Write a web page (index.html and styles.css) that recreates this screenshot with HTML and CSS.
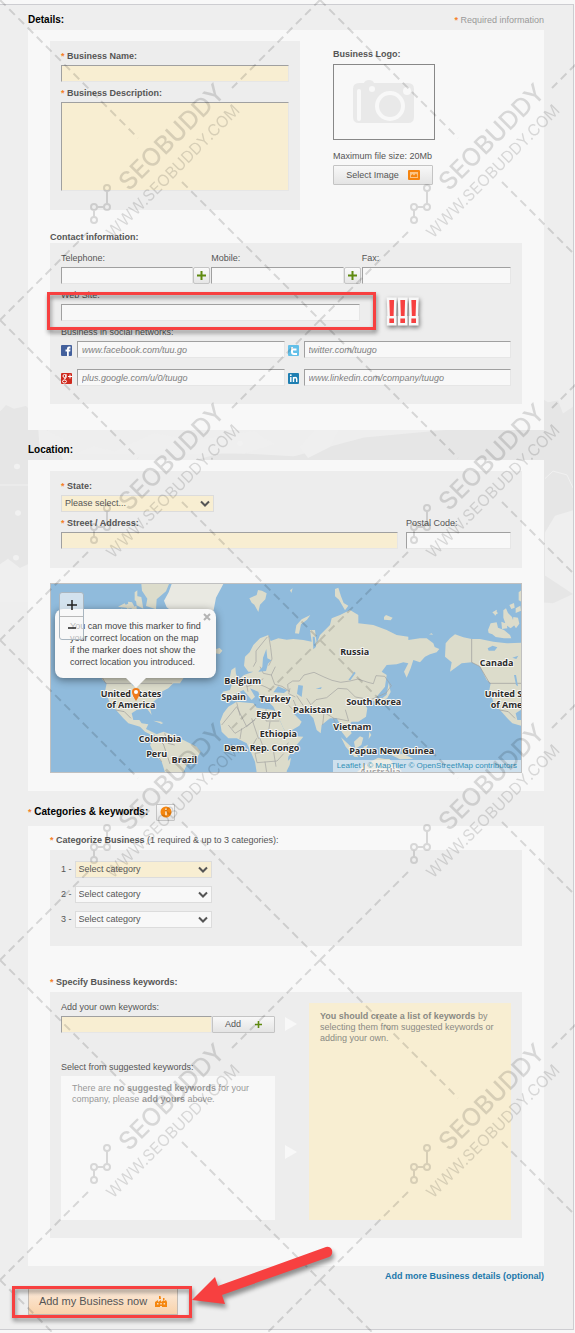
FILE: index.html
```html
<!DOCTYPE html>
<html lang="en">
<head>
<meta charset="utf-8">
<meta name="viewport" content="width=device-width, initial-scale=1">
<title>Add my Business</title>
<link rel="stylesheet" href="styles.css">
</head>
<body>
<main class="page">
<svg class="backdrop" viewBox="0 0 573 290" preserveAspectRatio="none" aria-hidden="true">
  <path fill="#e6e6e6" d="M0 50l6-7 8 4 12-3 16 18 8 12-6 10 14 6 6 14 50 12 60-8 50-14 70 4 70-20 100-10 70-30 6-3 8 5 10-2 5 14 14-10 16-6v200l-40 20-110-10H0z"/>
  <path fill="#efefef" d="M38 65l24 14 14 16 18-8 20 6 40-20 40 8 60-10 20 14-30 10H40zM318 66l20 4-8 18-22 12-8-12zM0 214l8-6 12 10 8-4v40H0zM545 180l10-18 18-6v90l-28-20z"/>
  <g fill="#f1f1f1"><circle cx="17" cy="109" r="3"/><circle cx="18" cy="159" r="3"/><circle cx="16" cy="207" r="3"/><circle cx="240" cy="84" r="3"/></g>
  <path d="M0 129h28M545 122l8-8 14 4 6 14" fill="none" stroke="#f1f1f1"/>
</svg>
<form class="content">
  <header class="head head-first"><h2>Details:</h2><p class="required-note"><span class="star">*</span> Required information</p></header>
  <section class="panel details">
    <div class="details-row">
      <div class="box identity">
        <label for="name"><span class="star">*</span> Business Name:</label>
        <input class="field needed" id="name" type="text">
        <label for="desc"><span class="star">*</span> Business Description:</label>
        <textarea class="field needed desc" id="desc"></textarea>
      </div>
      <div class="logo-col">
        <b>Business Logo:</b>
        <div class="logo-frame">
          <svg width="64" height="46" viewBox="0 0 64 46" aria-hidden="true"><path fill="#e9e9e9" d="M7 4h5q1-3 5-3t5 3h34q6 0 6 6v28q0 6-6 6H7q-6 0-6-6V10q0-6 6-6z"/><rect x="5" y="10" width="4" height="32" rx="2" fill="#f8f8f8"/><circle cx="20" cy="10" r="3" fill="#f8f8f8"/><circle cx="55" cy="12" r="4" fill="#f8f8f8"/><circle cx="38" cy="27" r="15" fill="#f8f8f8"/><circle cx="38" cy="27" r="11" fill="#e9e9e9"/></svg>
        </div>
        <span>Maximum file size: 20Mb</span>
        <button class="btn select-image" type="button">Select Image
          <svg width="12" height="10" viewBox="0 0 12 10" aria-hidden="true"><rect width="12" height="10" rx="1" fill="#f58410"/><path fill="#fbc588" d="M2 2h8v6H2z"/><path fill="#f58410" d="M3 7V5.500l1.500-1.500L6 5.500 8 3.500l1.200 1.500v2z"/></svg>
        </button>
      </div>
    </div>
    <h3 class="sub contact-title">Contact information:</h3>
    <div class="box contact">
      <div class="phones">
        <div class="stack"><label class="plain" for="tel">Telephone:</label><div class="joined"><input class="field" id="tel" type="tel"><button class="plus" type="button" aria-label="Add telephone"><svg width="9" height="9" viewBox="0 0 9 9"><path d="M3.500 0h2v3.500H9v2H5.500V9h-2V5.500H0v-2h3.500z" fill="#5f8a10"/></svg></button></div></div>
        <div class="stack"><label class="plain" for="mob">Mobile:</label><div class="joined"><input class="field" id="mob" type="tel"><button class="plus" type="button" aria-label="Add mobile"><svg width="9" height="9" viewBox="0 0 9 9"><path d="M3.500 0h2v3.500H9v2H5.500V9h-2V5.500H0v-2h3.500z" fill="#5f8a10"/></svg></button></div></div>
        <div class="stack"><label class="plain" for="fax">Fax:</label><input class="field" id="fax" type="tel"></div>
      </div>
      <div class="stack website"><label class="plain" for="web">Web Site:</label><input class="field" id="web" type="url"><div class="callout web-callout"></div><span class="bangs">!!!</span></div>
      <div class="stack">
        <span>Business in social networks:</span>
        <div class="social">
          <label class="net"><svg width="12" height="12" viewBox="0 0 12 12"><rect width="11" height="11" y="1" rx="1" fill="#43609c"/><path d="M6 12V7.500H4.500v-2H6V4.500Q6 2.500 8 2.500h1.500v2h-1q-.7 0-.7.700v.300h1.700l-.3 2H7.800V12z" fill="#fff"/></svg><input class="field" type="text" aria-label="Facebook" placeholder="www.facebook.com/tuu.go"></label>
          <label class="net"><svg width="12" height="12" viewBox="0 0 12 12"><rect width="11" height="11" y="1" rx="1" fill="#62bfe8"/><path d="M4 3v5q0 2 2 2h3M4 5.500h4.500" fill="none" stroke="#fff" stroke-width="2"/></svg><input class="field" type="text" aria-label="Twitter" placeholder="twitter.com/tuugo"></label>
          <label class="net"><svg width="12" height="12" viewBox="0 0 12 12"><rect width="11" height="11" y="1" rx="1" fill="#cf2a1e"/><g fill="none" stroke="#fff"><circle cx="3.500" cy="4" r="1.500"/><path d="M5 2v4L3 7"/><ellipse cx="3.500" cy="9.500" rx="2" ry="1.500"/><path d="M7 4.500h4M9 2.500v4"/></g></svg><input class="field" type="text" aria-label="Google Plus" placeholder="plus.google.com/u/0/tuugo"></label>
          <label class="net"><svg width="12" height="12" viewBox="0 0 12 12"><rect width="11" height="11" y="1" rx="1" fill="#1f7fb2"/><path d="M2.800 5v5M5.500 10V5m0 2q0-1.500 1.600-1.500T8.700 7v3" fill="none" stroke="#fff" stroke-width="1.400"/><circle cx="2.800" cy="3.200" r=".9" fill="#fff"/></svg><input class="field" type="text" aria-label="LinkedIn" placeholder="www.linkedin.com/company/tuugo"></label>
        </div>
      </div>
    </div>
  </section>

  <header class="head"><h2>Location:</h2></header>
  <section class="panel location">
    <div class="box address">
      <label for="state"><span class="star">*</span> State:</label>
      <div class="pick state"><select class="needed" id="state"><option>Please select...</option></select><svg width="10" height="7" viewBox="0 0 10 7" aria-hidden="true"><path d="M1 1.500l4 4 4-4" fill="none" stroke="#555" stroke-width="2"/></svg></div>
      <div class="street">
        <div class="stack"><label for="street"><span class="star">*</span> Street / Address:</label><input class="field needed" id="street" type="text"></div>
        <div class="stack"><label class="plain" for="zip">Postal Code:</label><input class="field" id="zip" type="text"></div>
      </div>
    </div>
    <div class="map">
      <svg class="map-art" viewBox="0 0 1410 564" preserveAspectRatio="xMinYMin slice" role="img" aria-label="World map">
        <defs>
          <g id="americas" stroke-linejoin="round">
            <path d="M65 205L78 190 93 178 118 187 143 192 168 192 208 200 248 205 291 203 400 215 405 240 440 290 430 310 420 325 400 325 385 340 365 350 360 365 340 380 330 400 335 420 320 400 290 405 275 415 280 435 298 435 305 445 325 448 318 462 335 470 350 478 370 470 400 480 430 495 470 515 482 530 470 550 440 570 430 592 375 592 365 560 345 540 330 510 335 500 345 480 330 478 315 470 300 455 265 445 250 430 228 405 208 380 196 345 200 325 188 315 176 290 168 275 143 262 113 265 78 290 83 262 63 245z"/>
            <path d="M192 165L200 145 218 142 222 158 240 165 258 180 262 190 240 190 215 186 205 178 194 174zM205 112l14-8-4 18zM214 105l8 10-10 6zM238 106l8-6 6 14 12 12 8 24-12 10-14-10-8-22zM232 140l16 6 2 14-16 2zM268 126l14 2 4 18-10 14-10-16zM256 90l14-6 2 14-10 4zM284 52l8-6v34l-8-4zM275 100l14-8 2 15-16 7z"/>
            <path d="M340 437l25 3-5 5zM360 440l10 4-8 4z"/>
            <path d="M143 192v70l24 12 30 51h200M227 405l26 5 20 20M345 485l25 22 20 60M345 530l20 30M374 475l10 30 20 5" fill="none" stroke="#999" stroke-width="2"/>
            <path d="M191 220l15-8 14 5-8 10-18 0zM265 248l18-6-6 10zM270 300l6 30 6 4-6-34z" fill="#90bbdc"/>
          </g>
        </defs>
        <g transform="translate(-33 -27)" fill="#dcdccb">
          <path fill="#e9e9e2" d="M395 27l-9 25-14 25 8 20 20 15 120-2 8-42 22-41z"/>
          <path d="M304 27h83l-9 22-28 24-2 30-30-10 4-22-16-24zM286 62l18 4 6 35-20-10zM264 80l12 2 10 18-20 0zM234 95l20-10 10 14zM525 223l14-4 8 8-8 10-14-2zM628 70l22-10 4-15 12 2 14 8-4 18-16 16-5 22-12-22-8-6z"/>
          <use href="#americas"/><use href="#americas" x="1152"/>
          <path d="M612 272L615 245 629 232 640 210 660 190 685 180 692 198 715 190 740 194 760 192 790 195 815 200 810 165 825 165 830 205 840 180 870 150 875 130 900 120 930 105 955 120 955 145 1000 150 1040 165 1070 180 1105 185 1105 195 1140 190 1160 190 1180 205 1184 216 1198 222 1190 232 1170 238 1155 245 1140 262 1120 255 1112 280 1100 308 1092 290 1105 265 1090 262 1070 268 1040 270 1025 290 1040 300 1035 335 1010 365 1020 385 1005 380 985 370 965 375 982 400 978 425 955 440 935 440 925 450 935 475 920 490 905 470 902 450 890 430 870 430 845 450 842 475 830 465 820 430 805 415 780 412 760 415 785 440 778 452 740 475 730 460 715 425 700 395 680 375 665 380 655 350 630 340 645 365 635 375 610 345 590 355 570 380 548 378 548 350 570 345 575 330 600 310 612 300 640 290 625 290z"/>
          <path d="M565 395L590 380 640 385 650 398 700 405 715 425 730 460 742 482 790 485 770 510 745 545 740 592 650 592 645 560 630 525 620 505 590 490 565 490 545 470 540 440 550 415zM570 305l4-20 12-8 2 20 10 20-20 8-16-2zM555 312l10-4-2 16-10 2zM765 175l4-24 16-18 26-13-10 14-18 14-6 28zM737 580l4-20 12-12-4 22-10 20zM885 42l10-4 8 26 8 20 14 8-10 14-18-32-12-10zM1032 126l6-6 20 8-6 8-20-2zM1046 323l6 28-10 18-26 18 4-12 20-16zM1167 178l8-3 4 4zM903 487l32 30 20 30-12-2-26-30zM942 500l18-16 10 4-6 22-18 12zM970 515l14-6-6 14 4 18-8-4zM1040 533l50 4 30 14-40 2zM972 572l20-12 22-12 20 4 14 0 14 14 20 26H950zM750 46l8-6-4 14zM988 470l6 10-8 12z"/>
          <path d="M640 275l8-15 0-32 24-30 10-12M686 182l6 36 4 34-10 20M660 275l10 20 24 5 12-25M694 300l10 28 22 6 24 16M600 320l20 10 4 20M620 335l30-10 20-14M650 325l25 10 20 10M545 450l45-55 30 60 50-45M678 402v36h40M590 382l10 40M565 450l20 25 25-15 35-25M605 460l-5 32M635 430l20 60 55-20 25 10M650 490l-15 26M660 490l15 40 30-10 25 5 15-22M690 440l-5 34M675 530l-30 5 6 28 60-5 20-22M675 560l5 32M700 525l8 50M745 350l-2-22 15-10 20 0 14-18 30-8 30 14 24 10 26 6 28-4 24-6 30 10 16 4 8-24 26 2 20 28-16 22-22 10-24 10-46-8-24-24-28-2-34 28-32 6-14 14M750 340l-4 16 20 10M770 362l20 30M760 375l14 34M800 370l14 22M848 450l4-38 30 18 14 2 30 6M880 430l10 22M745 390l20 20M916 404l10 34" fill="none" stroke="#a2a2a0" stroke-width="2"/>
          <path d="M655 290l12-14 2-28 10-26 3 28 12 6-10 10-6 22zM700 352l14-18 28 12-10 8zM775 330l14 2-4 34-14-10zM827 342l18-6-2 6zM925 315l18-25 4 4-16 22zM818 185l6 0 4 30-8 8z" fill="#90bbdc"/>
        </g>
        <g class="places">
          <text x="240" y="340">United States</text><text x="240" y="373">of America</text>
          <text x="327" y="475">Colombia</text><text x="317" y="518">Peru</text><text x="400" y="537">Brazil</text>
          <text x="575" y="301">Belgium</text><text x="548" y="348">Spain</text><text x="672" y="353">Turkey</text><text x="653" y="399">Egypt</text><text x="682" y="459">Ethiopia</text><text x="632" y="502">Dem. Rep. Congo</text><text x="785" y="386">Pakistan</text>
          <text x="911" y="212">Russia</text><text x="968" y="363">South Korea</text><text x="904" y="437">Vietnam</text><text x="1022" y="510">Papua New Guinea</text><text x="988" y="573">Australia</text><text x="1337" y="246">Canada</text><text x="1392" y="340">United States</text><text x="1392" y="373">of America</text>
        </g>
      </svg>
      <div class="popup"><p>You can move this marker to find your correct location on the map if the marker does not show the correct location you introduced.</p><button class="close" type="button" aria-label="Close"><svg width="8" height="8" viewBox="0 0 8 8"><path d="M1 1l6 6M7 1L1 7" stroke="#b4b4b4" stroke-width="2"/></svg></button></div>
      <svg class="marker" width="10" height="14" viewBox="0 0 10 14" aria-hidden="true"><path d="M5 14Q1 8 1 5a4 4 0 0 1 8 0Q9 8 5 14z" fill="#ef7b1a"/><circle cx="5" cy="5" r="2" fill="#fff"/></svg>
      <div class="zoomer"><button type="button" aria-label="Zoom in"><svg width="10" height="10" viewBox="0 0 10 10"><path d="M5 0v10M0 5h10" stroke="#222" stroke-width="1.500"/></svg></button><button type="button" aria-label="Zoom out"><svg width="8" height="10" viewBox="0 0 8 10"><path d="M0 5h8" stroke="#222" stroke-width="1.500"/></svg></button></div>
      <p class="credits"><a href="#leaflet">Leaflet</a> | <a href="#maptiler">© MapTiler</a> <a href="#osm">© OpenStreetMap contributors</a></p>
    </div>
  </section>

  <header class="head head-cats"><h2><span class="star">*</span> Categories &amp; keywords:</h2><button class="btn info" type="button" aria-label="Information"><svg width="12" height="12" viewBox="0 0 12 12"><circle cx="6" cy="6" r="5.500" fill="#f5860f"/><path d="M6 5.200v4M6 2.500v1.600" stroke="#ffe9cc" stroke-width="1.600"/></svg></button></header>
  <section class="panel cats">
    <h3 class="sub"><span class="star">*</span> Categorize Business <span class="light">(1 required &amp; up to 3 categories):</span></h3>
    <div class="box choices">
      <div class="choice"><label class="plain" for="c1">1 -</label><div class="pick"><select class="needed" id="c1"><option>Select category</option></select><svg width="10" height="7" viewBox="0 0 10 7" aria-hidden="true"><path d="M1 1.500l4 4 4-4" fill="none" stroke="#555" stroke-width="2"/></svg></div></div>
      <div class="choice"><label class="plain" for="c2">2 -</label><div class="pick"><select id="c2"><option>Select category</option></select><svg width="10" height="7" viewBox="0 0 10 7" aria-hidden="true"><path d="M1 1.500l4 4 4-4" fill="none" stroke="#555" stroke-width="2"/></svg></div></div>
      <div class="choice"><label class="plain" for="c3">3 -</label><div class="pick"><select id="c3"><option>Select category</option></select><svg width="10" height="7" viewBox="0 0 10 7" aria-hidden="true"><path d="M1 1.500l4 4 4-4" fill="none" stroke="#555" stroke-width="2"/></svg></div></div>
    </div>
    <h3 class="sub specify"><span class="star">*</span> Specify Business keywords:</h3>
    <div class="box keywords">
      <div class="kw-left">
        <label class="plain" for="kw">Add your own keywords:</label>
        <div class="joined"><input class="field needed" id="kw" type="text"><button class="btn add" type="button">Add <svg width="7" height="7" viewBox="0 0 7 7" aria-hidden="true"><path d="M3.500 0v7M0 3.500h7" stroke="#5f8a10" stroke-width="1.600"/></svg></button></div>
        <span class="suggest-title">Select from suggested keywords:</span>
        <p class="suggested">There are <b>no suggested keywords</b> for your company, please <b>add yours</b> above.</p>
      </div>
      <div class="arrows"><svg width="12" height="14" viewBox="0 0 12 14" aria-hidden="true"><path d="M0 0l12 7-12 7z" fill="#f8f8f8"/></svg><svg width="12" height="14" viewBox="0 0 12 14" aria-hidden="true"><path d="M0 0l12 7-12 7z" fill="#f8f8f8"/></svg></div>
      <p class="chosen"><b>You should create a list of keywords</b> by selecting them from suggested keywords or adding your own.</p>
    </div>
  </section>

  <footer class="foot">
    <a class="more" href="#more">Add more Business details (optional)</a>
    <div class="submit-wrap">
      <button class="submit" type="submit">Add my Business now
        <svg width="12" height="11" viewBox="0 0 12 11" aria-hidden="true"><path fill="#f5860f" d="M0 11V6l3-2v2l3-2v2l3-2v1l2-1 1 2v5zM4 0h1.500l.5 3H4zM8 2h1.500v2H8z"/><path fill="#fbdcbb" d="M2 7h1.500v1.500H2zM5.300 7h1.500v1.500H5.300zM8.600 7h1.500v1.500H8.600zM5 10h2v1H5z"/></svg>
      </button>
      <div class="callout submit-callout"></div>
      <svg class="arrow" width="150" height="64" viewBox="0 0 150 64" aria-hidden="true"><path d="M4 55L27 32l3 9L138 2q4-1 6 3 1 5-3 7L34 50l3 9z" fill="#f74040"/></svg>
    </div>
  </footer>
</form>
</main>
<svg class="watermark" aria-hidden="true">
  <defs>
    <g id="mark">
      <path d="M0 0l138 138M182 182l138 138M320 0l-88 88M88 232L0 320" stroke="#000" stroke-width="2" stroke-dasharray="8 5" fill="none"/>
      <g stroke="#000" stroke-width="2" fill="none"><circle cx="107" cy="188" r="3"/><circle cx="94" cy="207" r="3"/><circle cx="107" cy="207" r="3"/><circle cx="94" cy="220" r="3"/><path d="M107 191v13M104 207h-7M94 210v7"/></g>
      <text class="wm-big" transform="translate(129 192) rotate(-45)">SEOBUDDY</text>
      <text class="wm-small" transform="translate(113 239) rotate(-45)">WWW.SEOBUDDY.COM</text>
    </g>
  </defs>
  <use href="#mark"/><use href="#mark" x="320"/>
  <use href="#mark" y="320"/><use href="#mark" x="320" y="320"/>
  <use href="#mark" y="640"/><use href="#mark" x="320" y="640"/>
  <use href="#mark" y="960"/><use href="#mark" x="320" y="960"/>
  <use href="#mark" y="1280"/><use href="#mark" x="320" y="1280"/>
</svg>
</body>
</html>
```

FILE: styles.css
```css
* { box-sizing: border-box; }
body {
  margin: 0;
  position: relative;
  background: #f8f8f8;
  color: #555;
  font: 9px/11px "Liberation Sans", Arial, sans-serif;
}
h2, h3, p { margin: 0; }
svg { display: block; flex: none; }
input, select, textarea, button { font: inherit; color: inherit; margin: 0; }
button { padding: 0; }
.page {
  position: relative;
  margin: 4px 1px 2px 0;
  border: solid #cdcdd1;
  border-width: 1px 1px 1px 0;
  background: #eee;
}
.backdrop { position: absolute; left: 0; top: 360px; width: 100%; height: 270px; }
.content { position: relative; padding: 0 29px 0 28px; }
.star { color: #f5822a; font-size: 9px; font-weight: 700; }

.head { display: flex; align-items: center; height: 30px; padding-top: 10px; }
.head-first { height: 25px; padding-top: 5px; justify-content: space-between; }
.head-cats { height: 35px; padding-top: 7px; gap: 8px; }
.head h2 { color: #000; font-size: 10px; line-height: 12px; }
.required-note { color: #999; }
.panel { background: #f8f8f8; padding: 11px 22px; }
.box { background: #ededed; padding: 10px 11px; }
label { display: block; font-weight: 700; }
.plain { font-weight: 400; }
.sub { font-size: 9px; line-height: 11px; }
.light { font-weight: 400; }
.stack { display: flex; flex-direction: column; gap: 3px; min-width: 0; }

.field {
  display: block;
  width: 100%;
  min-width: 0;
  height: 17px;
  padding: 0 4px;
  border: 1px solid;
  border-color: #a0a0a0 #e6e6e6 #e6e6e6 #a0a0a0;
  border-radius: 0;
  background: #f8f8f8;
}
.field::placeholder { color: #808080; font-style: italic; opacity: 1; }
.field.needed, .pick select.needed { background: #f8eed2; }
.joined { display: flex; }
.btn {
  display: flex;
  align-items: center;
  justify-content: center;
  border: 1px solid #c4c4c4;
  border-radius: 1px;
  background: linear-gradient(#f8f8f8, #e4e4e4);
}
.pick { position: relative; width: 137px; }
.pick select {
  display: block;
  appearance: none;
  width: 100%;
  height: 17px;
  padding: 0 3px;
  border: 1px solid #dcdcdc;
  border-radius: 0;
  background: #f8f8f8;
}
.pick svg { position: absolute; right: 4px; top: 5px; pointer-events: none; }

.details { padding-bottom: 26px; }
.details-row { display: flex; gap: 33px; }
.identity { flex: 0 1 250px; padding-bottom: 19px; }
.identity label { margin-bottom: 3px; }
.identity .field + label { margin-top: 6px; }
.identity .desc { height: 89px; resize: none; }
.logo-col { padding-top: 8px; }
.logo-frame {
  display: flex;
  align-items: center;
  justify-content: center;
  width: 102px;
  height: 76px;
  margin: 4px 0 11px;
  border: 1px solid #888;
}
.select-image { gap: 9px; width: 100px; height: 20px; margin-top: 3px; }
.contact-title { margin-top: 22px; }
.contact { display: flex; flex-direction: column; gap: 6px; padding-bottom: 18px; }
.phones { display: grid; grid-template-columns: 1fr 1fr 1fr; gap: 1px; }
.plus {
  display: flex;
  flex: none;
  align-items: center;
  justify-content: center;
  width: 17px;
  height: 17px;
  border: 1px solid #c4c4c4;
  border-radius: 2px;
  background: linear-gradient(#fafafa, #e6e6e6);
}
.website { position: relative; width: 66.5%; }
.callout {
  position: absolute;
  border: 3px solid #f74040;
  filter: drop-shadow(1px 3px 2px rgba(0, 0, 0, .45));
  pointer-events: none;
  z-index: 3;
}
.web-callout { inset: 2px -16px -9px -14px; }
.bangs {
  position: absolute;
  left: calc(100% + 26px);
  bottom: -7px;
  z-index: 3;
  color: #f74040;
  font-size: 33px;
  line-height: 33px;
  font-weight: 700;
  -webkit-text-stroke: 5px #f8f8f8;
  stroke-linejoin: round;
  paint-order: stroke fill;
  filter: drop-shadow(1px 2px 2px rgba(0, 0, 0, .5));
}
.social { display: grid; grid-template-columns: 1fr 1fr; gap: 11px 3px; }
.net { display: flex; align-items: center; gap: 4px; font-weight: 400; }

.location { padding-bottom: 18px; }
.address { padding-bottom: 19px; }
.state { width: 153px; margin: 3px 0 6px; }
.street { display: grid; grid-template-columns: 337fr 105fr; gap: 8px; }
.map {
  position: relative;
  height: 190px;
  margin-top: 15px;
  overflow: hidden;
  border: 1px solid #c0c0c0;
  background: #90bbdc;
}
.map-art { width: 100%; height: 188px; }
.places text {
  font: 700 27px "Open Sans", "Noto Sans", sans-serif;
  text-anchor: middle;
  fill: #2b2b2b;
  stroke: #f6f6f4;
  stroke-width: 6px;
  stroke-linejoin: round;
  paint-order: stroke fill;
}
.popup {
  position: absolute;
  left: 4px;
  top: 25px;
  width: 161px;
  padding: 11px 13px 10px 15px;
  border-radius: 8px;
  background: #f8f8f8;
  color: #444;
  line-height: 12px;
  box-shadow: 0 2px 8px rgba(0, 0, 0, .45);
}
.popup::after {
  content: "";
  position: absolute;
  left: 71px;
  top: 100%;
  border: solid transparent;
  border-top-color: #f8f8f8;
  border-width: 10px 10px 0;
}
.close { position: absolute; right: 5px; top: 4px; border: 0; background: none; }
.marker { position: absolute; left: 80px; top: 103px; }
.zoomer {
  position: absolute;
  left: 8px;
  top: 8px;
  width: 25px;
  border: 1px solid #a9b6c0;
  border-radius: 3px;
  background: rgba(248, 248, 248, .65);
}
.zoomer button {
  display: flex;
  align-items: center;
  justify-content: center;
  width: 100%;
  height: 23px;
  border: 0;
  background: none;
}
.zoomer button + button { border-top: 1px solid #b8b8b8; }
.credits {
  position: absolute;
  right: 0;
  bottom: 0;
  padding: 0 4px;
  background: rgba(248, 248, 248, .6);
  font-size: 8px;
  line-height: 12px;
}
.credits a { color: #3390b8; text-decoration: none; }

.info { width: 19px; height: 17px; }
.cats { padding-top: 9px; padding-bottom: 28px; }
.choices { display: flex; flex-direction: column; gap: 8px; margin-top: 4px; padding: 11px 11px 18px; }
.choice { display: flex; align-items: center; gap: 3px; }
.specify { margin-top: 31px; }
.keywords {
  display: grid;
  grid-template-columns: 214fr 34px 202fr;
  margin-top: 4px;
  padding: 10px 11px 18px;
}
.kw-left .joined { margin-top: 3px; }
.add { flex: none; gap: 14px; width: 63px; height: 17px; }
.suggest-title { display: block; margin: 29px 0 3px; }
.suggested { height: 144px; padding: 7px 11px; background: #f8f8f8; color: #999; }
.arrows { display: flex; flex-direction: column; gap: 114px; padding: 15px 0 0 10px; }
.chosen { margin-top: 1px; padding: 8px 11px; background: #f8eed2; color: #8a8a84; }

.foot { padding: 5px 0 14px; }
.more { display: block; color: #1c78ab; font-weight: 700; text-align: right; text-decoration: none; }
.submit-wrap { position: relative; width: 150px; margin-top: 6px; }
.submit {
  display: flex;
  align-items: center;
  justify-content: center;
  gap: 8px;
  width: 100%;
  height: 27px;
  border: 1px solid #c4bcb4;
  background: linear-gradient(#fbeadb, #f9d3ab);
  font-size: 11px;
}
.submit-callout { inset: -2px -14px -3px -16px; }
.arrow {
  position: absolute;
  left: 160px;
  top: -43px;
  z-index: 3;
  filter: drop-shadow(2px 4px 2px rgba(0, 0, 0, .4));
}
.watermark {
  position: absolute;
  left: 0;
  top: 0;
  width: 100%;
  height: 100%;
  overflow: hidden;
  opacity: .13;
  pointer-events: none;
}
.wm-big { font: 500 25px Inter, sans-serif; }
.wm-small { font: 400 16px Inter, sans-serif; }
```
